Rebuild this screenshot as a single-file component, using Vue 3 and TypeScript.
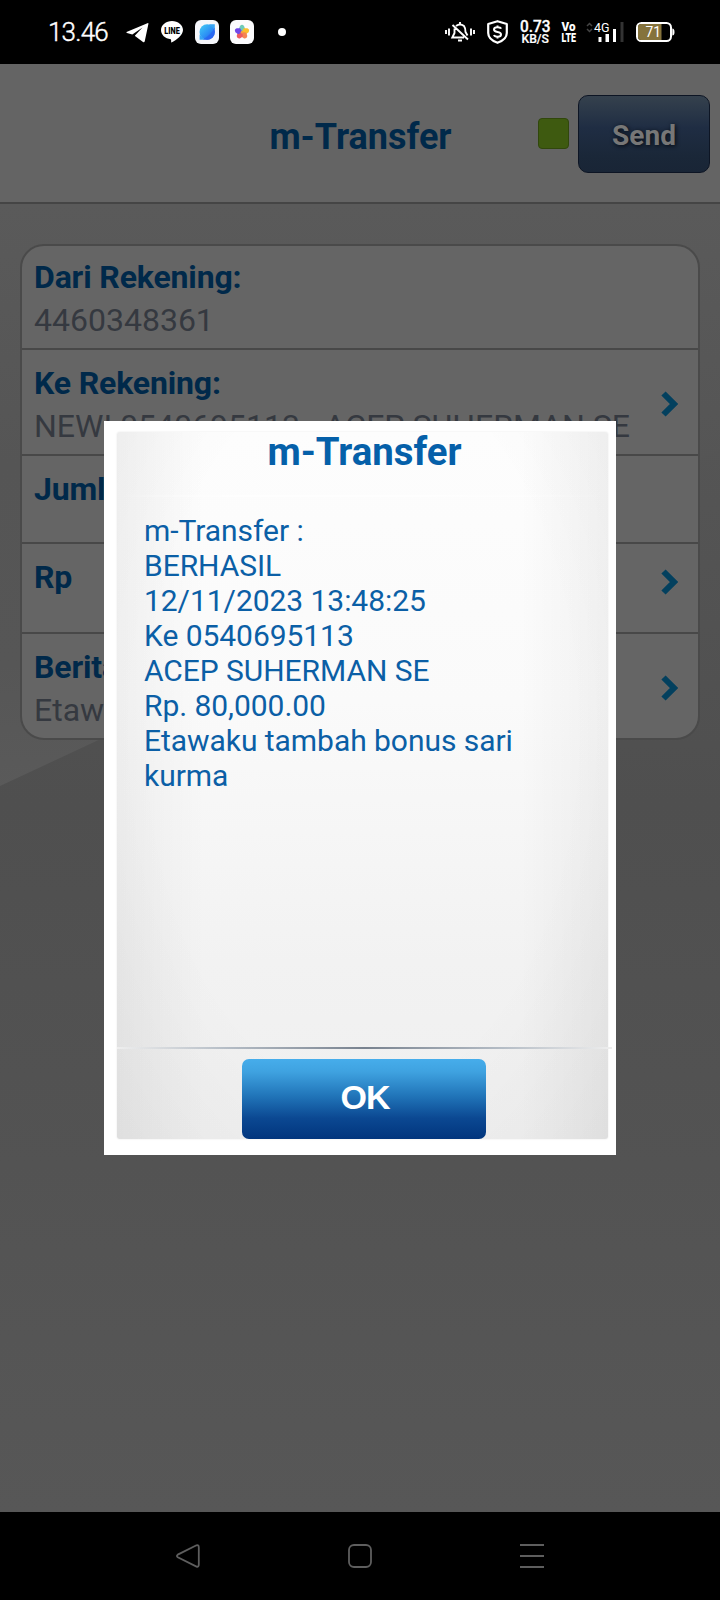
<script setup lang="ts">
interface Row {
  label: string
  value: string
  height: number
  arrow: 'none' | 'low' | 'high'
}

const rows: Row[] = [
  { label: 'Dari Rekening:', value: '4460348361', height: 104, arrow: 'none' },
  { label: 'Ke Rekening:', value: 'NEWI 0540695113 - ACEP SUHERMAN SE', height: 106, arrow: 'low' },
  { label: 'Jumlah Uang:', value: '', height: 88, arrow: 'none' },
  { label: 'Rp', value: '', height: 90, arrow: 'high' },
  { label: 'Berita:', value: 'Etawaku', height: 104, arrow: 'low' },
]

const message: string[] = [
  'm-Transfer :',
  'BERHASIL',
  '12/11/2023 13:48:25',
  'Ke 0540695113',
  'ACEP SUHERMAN SE',
  'Rp. 80,000.00',
  'Etawaku tambah bonus sari',
  'kurma',
]

const petals: { angle: number; color: string }[] = [
  { angle: 0, color: '#6fcbb8' },
  { angle: 72, color: '#fbbf2c' },
  { angle: 144, color: '#f58352' },
  { angle: 216, color: '#ee5a5f' },
  { angle: 288, color: '#7047e8' },
]
</script>

<template>
  <div class="phone">
    <header class="status">
      <span class="time">13.46</span>
      <svg class="telegram" width="23" height="20" viewBox="0 0 23 20">
        <path d="M22 0 L0.500 9 Q0 9.600 1 10 L6.300 11.500 L16.500 4.600 L9 12.600 L9 13 L17 19 Q18.400 19.700 18.800 18 L22.400 1 Q22.600 0 22 0Z" fill="#fff" />
      </svg>
      <svg class="line" width="22" height="22" viewBox="0 0 22 22">
        <path d="M11 0 C17 0 22 4 22 9 C22 14 15.500 19 10.500 21.500 C9.800 21.600 10.500 19 9.800 18.200 C4 17.500 0 13.800 0 9 C0 4 5 0 11 0Z" fill="#fff" />
        <text x="3.300" y="12.500" font-size="8.500" font-weight="900" textLength="15.500" lengthAdjust="spacingAndGlyphs">LINE</text>
      </svg>
      <svg class="browser" width="24" height="24" viewBox="0 0 24 24">
        <defs>
          <linearGradient id="globe" x1="0" y1="0" x2="1" y2="1">
            <stop offset="0" stop-color="#43cdf3" />
            <stop offset="0.500" stop-color="#2e97f5" />
            <stop offset="1" stop-color="#2455ed" />
          </linearGradient>
        </defs>
        <rect width="24" height="24" rx="6" fill="#f5f6fa" />
        <circle cx="12.200" cy="12" r="7.700" fill="url(#globe)" />
        <path d="M4.600 14.500 V19.800 H10Z M14 4.200 H19.800 V9.500Z" fill="#36a4f4" />
        <path d="M8 19.300 Q15.500 15.500 19.700 7.500 Q21.500 17 14 19.700 Q10 20.300 8 19.300Z" fill="#2863f0" opacity="0.750" />
      </svg>
      <svg class="gallery" width="24" height="24" viewBox="0 0 24 24">
        <rect width="24" height="24" rx="6" fill="#fbfbfd" />
        <g transform="translate(12 12.200)">
          <path
            v-for="p in petals"
            :key="p.angle"
            d="M0 0.500 L-3.200 -3 L-2 -6.300 Q0 -8.500 2 -6.300 L3.200 -3Z"
            :fill="p.color"
            :transform="`rotate(${p.angle})`"
          />
          <circle r="1.300" fill="#f9a03c" />
        </g>
      </svg>
      <span class="dot"></span>

      <svg class="bell" width="30" height="20" viewBox="0 0 30 20" fill="none" stroke="#fff" stroke-width="1.900">
        <path d="M1 8V12 M4 6.500V13.500 M26 6.500V13.500 M29 8V12" />
        <path d="M15 0V2.500 M11 4 Q15 0.800 19 4 Q20.500 6 20.500 10 L22.500 13.500 M9.500 6.500 V11 L7.300 15.500 H19 M7.500 3 L23 17.500 M13 18.500H17" />
      </svg>
      <svg class="shield" width="21" height="24" viewBox="0 0 21 24" fill="none" stroke="#fff" stroke-linejoin="round">
        <path d="M10.500 1.200 L19.800 4 V13 C19.800 18 15.500 21 10.500 22.800 C5.500 21 1.200 18 1.200 13 V4Z" stroke-width="2.200" />
        <path d="M14 8.800 Q13.500 7.300 10.500 7.300 Q7 7.300 7 9.600 Q7 11.500 10.500 12 Q14 12.500 14 14.500 Q14 16.700 10.500 16.700 Q7.500 16.700 7 15 M10.500 5.500V7.500 M10.500 16.500V18.500" stroke-width="2" />
      </svg>
      <svg class="speed" width="32" height="32" viewBox="0 -3 32 32" fill="#fff">
        <text x="0" y="13" font-size="16" font-weight="500" stroke="#fff" stroke-width="0.300" textLength="30.500" lengthAdjust="spacingAndGlyphs">0.73</text>
        <text x="1.500" y="24" font-size="12.500" font-weight="500" stroke="#fff" stroke-width="0.200" textLength="27.500" lengthAdjust="spacingAndGlyphs">KB/S</text>
      </svg>
      <svg class="volte" width="18" height="30" viewBox="-1 -4 18 30" fill="#fff">
        <text x="0.500" y="9.200" font-size="12.500" font-weight="900" textLength="14" lengthAdjust="spacingAndGlyphs">Vo</text>
        <text x="0.500" y="20" font-size="13" font-weight="900" textLength="14.500" lengthAdjust="spacingAndGlyphs">LTE</text>
      </svg>
      <svg class="signal" width="38" height="26" viewBox="0 -4 38 26">
        <path d="M1 4 L3.500 1.500 L6 4 M1 7 L3.500 9.500 L6 7" fill="none" stroke="#444" stroke-width="1.500" />
        <text x="8" y="10" fill="#fff" font-size="13.500" font-weight="400" textLength="15.500" lengthAdjust="spacingAndGlyphs">4G</text>
        <path d="M12.500 15h3v5h-3z M19.500 12h3.500v8h-3.500z M27 7h3v13h-3z" fill="#fff" />
        <path d="M34.500 0h3v20h-3z" fill="#333" />
      </svg>
      <svg class="battery" width="39" height="20" viewBox="0 0 39 20">
        <rect x="1" y="1" width="34" height="18" rx="4.500" fill="#000" stroke="#fff" stroke-width="2" />
        <path d="M5 2H25.500V18H5Q2 18 2 15V5Q2 2 5 2Z" fill="#85733c" />
        <path d="M36.300 6.500 Q38.500 6.500 38.500 10 Q38.500 13.500 36.300 13.500Z" fill="#fff" />
        <text x="9.500" y="15" fill="#fff" font-size="15" font-weight="400" textLength="15.500" lengthAdjust="spacingAndGlyphs">71</text>
      </svg>
    </header>

    <main class="app">
      <div class="titlebar">
        <h1>m-Transfer</h1>
        <span class="led"></span>
        <button class="send">Send</button>
      </div>

      <div class="content">
        <section class="card">
          <div v-for="row in rows" :key="row.label" class="row" :style="{ height: row.height + 'px' }">
            <div class="fields">
              <div class="label">{{ row.label }}</div>
              <div class="value">{{ row.value }}</div>
            </div>
            <svg v-if="row.arrow !== 'none'" class="arrow" :class="row.arrow" width="20" height="28" viewBox="0 0 20 28">
              <path d="M3.500 3.500 L14 14 L3.500 24.500" fill="none" stroke="#03405e" stroke-width="6" />
            </svg>
          </div>
        </section>
      </div>
    </main>

    <nav class="navbar">
      <svg width="24" height="24" viewBox="0 0 24 24">
        <path d="M20.500 1.300 L1.800 10.600 Q0 12 1.800 13.300 L20.500 22.600 Q22.800 23.300 22.800 20.500 V3.400 Q22.800 0.600 20.500 1.300Z" />
      </svg>
      <svg width="24" height="24" viewBox="0 0 24 24">
        <rect x="1" y="1" width="22" height="22" rx="5" />
      </svg>
      <svg width="24" height="24" viewBox="0 0 24 24">
        <path d="M0 1H24 M0 12H24 M0 23H24" />
      </svg>
    </nav>

    <div class="dialog">
      <div class="panel">
        <h2>m-Transfer</h2>
        <div class="divider"></div>
        <div class="message">
          <p v-for="text in message" :key="text">{{ text }}</p>
        </div>
        <div class="rule"></div>
        <button class="ok">OK</button>
      </div>
    </div>
  </div>
</template>

<style>
body {
  margin: 0;
  background: #000;
}
</style>

<style scoped>
.phone {
  position: relative;
  display: flex;
  flex-direction: column;
  width: 720px;
  height: 1600px;
  overflow: hidden;
  background: #000;
  font-family: Roboto, "Liberation Sans", sans-serif;
}

.phone * {
  box-sizing: border-box;
}

.status {
  display: flex;
  align-items: flex-start;
  height: 64px;
  padding-left: 48px;
  color: #fff;
  flex: none;
}

.status svg {
  flex: none;
}

.time {
  width: 78px;
  margin-top: 16px;
  font-size: 26px;
  font-weight: 300;
  line-height: 32px;
  letter-spacing: -0.8px;
  -webkit-text-stroke: 0.4px #fff;
  white-space: nowrap;
}

.telegram {
  margin-top: 23px;
}

.line {
  margin: 21px 0 0 12px;
}

.browser {
  margin: 20px 0 0 12px;
}

.gallery {
  margin: 20px 0 0 11px;
}

.dot {
  width: 8px;
  height: 8px;
  margin: 28px 0 0 24px;
  border-radius: 50%;
  background: #fff;
}

.bell {
  margin: 22px 0 0 159px;
}

.shield {
  margin: 20px 0 0 12px;
}

.speed {
  margin: 16px 0 0 12px;
}

.volte {
  margin: 18px 0 0 8px;
}

.signal {
  margin: 18px 0 0 8px;
}

.battery {
  margin: 22px 0 0 12px;
}

.app {
  position: relative;
  display: flex;
  flex-direction: column;
  height: 1448px;
  background: linear-gradient(#595959 140px, #4f4f4f 740px, #535353 1100px, #575757 1448px);
}

/* Lighter diagonal sweep behind the form */
.app::before {
  content: "";
  position: absolute;
  inset: 0;
  background: linear-gradient(#5a5a5a 140px, #555 400px, #565656 600px, #5a5a5a 730px);
  clip-path: polygon(0 0, 720px 0, 720px 386px, 0 722px);
}

.titlebar {
  position: relative;
  display: grid;
  grid-template-columns: 538px 31px 132px;
  column-gap: 0;
  height: 140px;
  border-bottom: 2px solid #454545;
  background: #646464;
}

h1 {
  margin: 52px 0 0;
  padding-left: 183px;
  text-align: center;
  color: #00294a;
  font-size: 36px;
  font-weight: 700;
  line-height: 42px;
}

.led {
  height: 31px;
  margin-top: 54px;
  border: 1px solid #31470c;
  border-radius: 4px;
  background: #3e5a10;
}

.send {
  width: 132px;
  height: 78px;
  margin: 31px 0 0 9px;
  padding: 4px 0 0;
  border: 1px solid #0d1524;
  border-radius: 10px;
  background: linear-gradient(#35414d, #1f2d43 42%, #1a2738 80%, #192536);
  color: #777;
  font: 700 28px/34px Roboto, "Liberation Sans", sans-serif;
  text-shadow: 1px 1px 4px #050a12;
}

.content {
  position: relative;
  padding: 40px 20px 0;
}

.card {
  overflow: hidden;
  border: 2px solid #4a4a4a;
  border-radius: 24px;
  background: #656565;
}

.row {
  display: flex;
  justify-content: space-between;
  align-items: center;
  padding: 0 18px 0 12px;
  border-bottom: 2px solid #484848;
}

.row:last-child {
  border-bottom: 0;
}

.fields {
  align-self: flex-start;
  padding-top: 12px;
  font-size: 32px;
  line-height: 43px;
  white-space: nowrap;
}

.row:first-child .fields {
  padding-top: 10px;
}

.label {
  color: #00294a;
  font-weight: 700;
  letter-spacing: -0.150px;
}

.value {
  color: #353940;
}

.arrow {
  flex: none;
}

.arrow.low {
  margin-top: 3px;
}

.arrow.high {
  margin-bottom: 13px;
}

.navbar {
  display: flex;
  align-items: center;
  justify-content: space-between;
  height: 88px;
  padding: 0 176px 0 176px;
}

.navbar svg {
  fill: none;
  stroke: #5e5e5e;
  stroke-width: 1.800;
}

.dialog {
  position: absolute;
  top: 421px;
  left: 104px;
  width: 512px;
  height: 734px;
  padding: 11px 8px 16px 13px;
  background: #fff;
}

.panel {
  display: flex;
  flex-direction: column;
  align-items: center;
  height: 707px;
  border-radius: 3px;
  background:
    linear-gradient(90deg, rgba(0, 0, 0, 0.040), rgba(0, 0, 0, 0) 18%, rgba(0, 0, 0, 0) 82%, rgba(0, 0, 0, 0.040)),
    radial-gradient(ellipse 85% 100% at 50% 42%, rgba(0, 0, 0, 0) 50%, rgba(0, 0, 0, 0.040) 90%),
    linear-gradient(#fdfdfd, #fafafa 38%, #f2f2f2 75%, #efefef);
  box-shadow: 0 0 2px #e2e2e2;
}

h2 {
  width: 100%;
  height: 63px;
  margin: 0;
  padding-top: 1px;
  text-align: center;
  text-indent: 4px;
  color: #0560a9;
  font-size: 38.400px;
  font-weight: 700;
  line-height: 38px;
}

.divider {
  width: 100%;
  height: 2px;
  background: linear-gradient(90deg, rgba(255, 255, 255, 0), rgba(255, 255, 255, 0.700) 30%, rgba(255, 255, 255, 0.700) 60%, rgba(255, 255, 255, 0));
}

.message {
  width: 100%;
  height: 550px;
  padding: 16px 27px 0;
  color: #0b5fa6;
  font-size: 30px;
  line-height: 35px;
  letter-spacing: -0.050px;
  white-space: nowrap;
}

.message p {
  margin: 0;
}

.rule {
  align-self: flex-start;
  width: 495px;
  height: 2px;
  flex: none;
  background: linear-gradient(90deg, #eee, #b5bdc6 22%, #78828f 50%, #b5bdc6 78%, #eee);
}

.ok {
  width: 244px;
  height: 80px;
  flex: none;
  margin: 10px 0 0 2px;
  padding: 0 0 5px 3px;
  border: 0;
  border-radius: 7px;
  background: linear-gradient(#46adeb, #3fa2e0 16%, #2175b9 46%, #0b4892 74%, #01357d);
  color: #fff;
  font: 700 34px/40px "Liberation Sans", sans-serif;
  letter-spacing: -1px;
}
</style>
